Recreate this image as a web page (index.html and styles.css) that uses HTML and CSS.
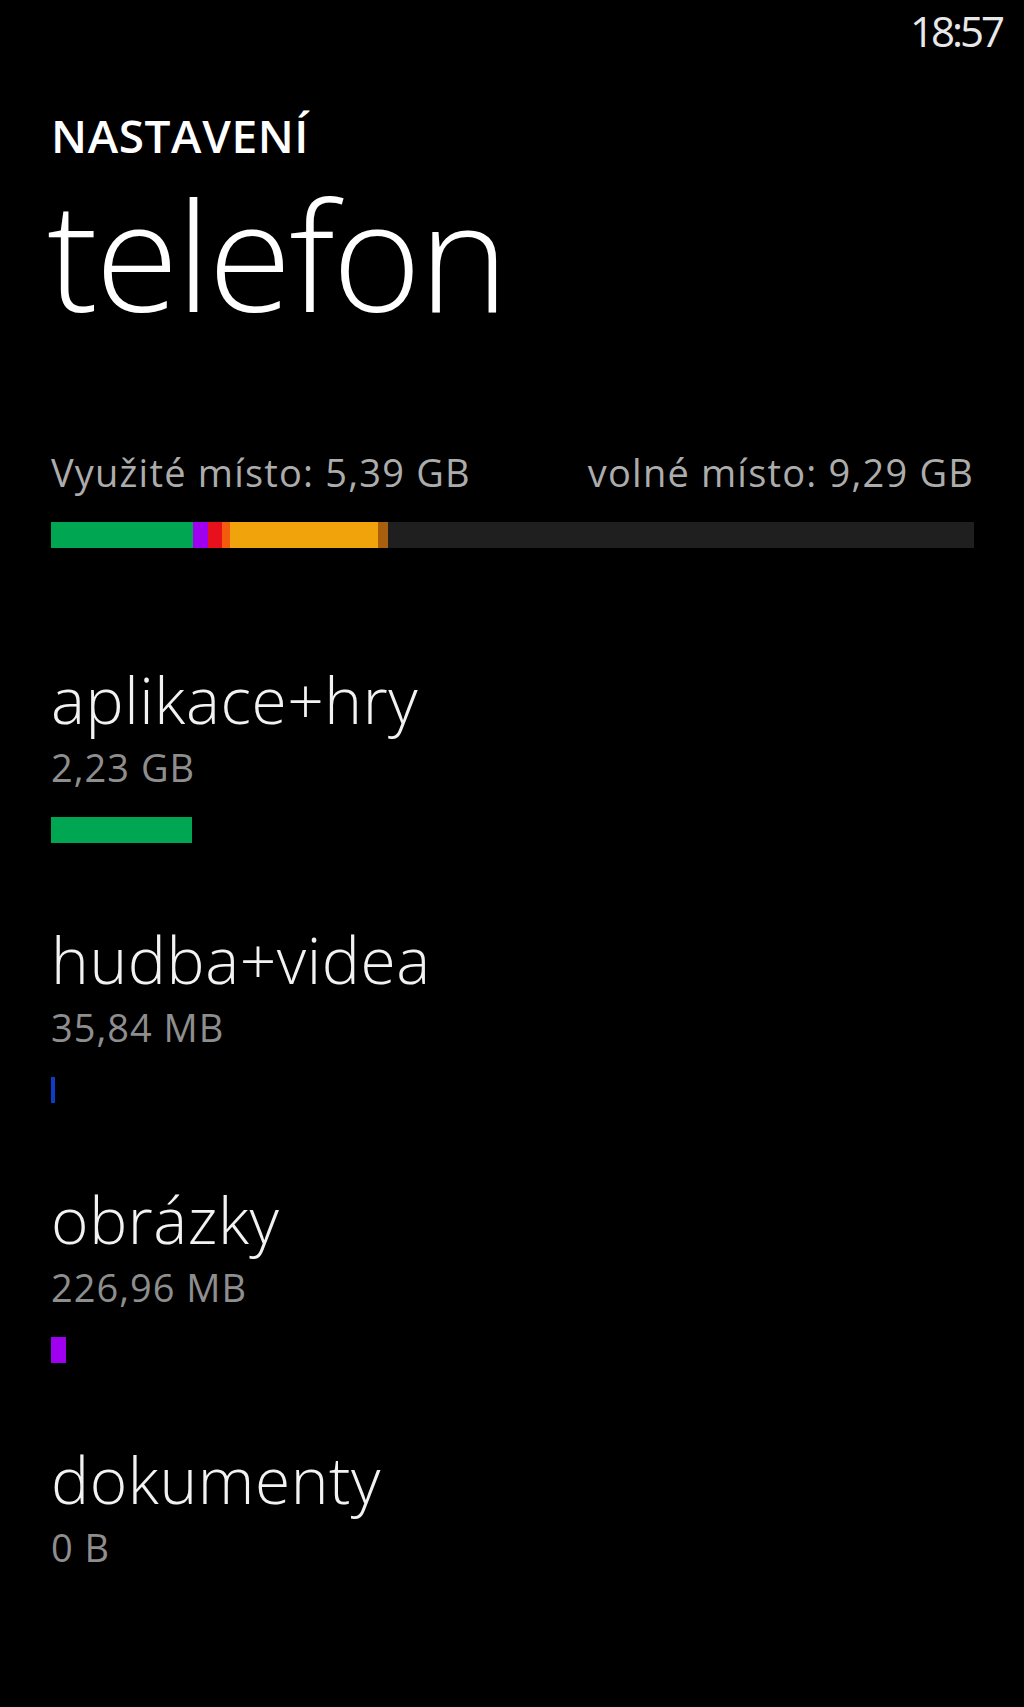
FILE: index.html
```html
<!DOCTYPE html>
<html lang="cs">
<head>
  <meta charset="UTF-8">
  <title>telefon</title>
  <link rel="stylesheet" href="styles.css">
</head>
<body>

  <div class="status-bar">
    <span class="clock">18:57</span>
  </div>

  <div class="page">
    <div class="app-title">NASTAVENÍ</div>
    <h1 class="page-title">telefon</h1>

    <div class="storage-summary">
      <span>Využité místo: 5,39 GB</span>
      <span>volné místo: 9,29 GB</span>
    </div>

    <div class="usage-bar">
      <div class="seg seg-apps" style="width: 142px;"></div>
      <div class="seg seg-pictures" style="width: 15px;"></div>
      <div class="seg seg-other" style="width: 14px;"></div>
      <div class="seg seg-temp" style="width: 8px;"></div>
      <div class="seg seg-system" style="width: 148px;"></div>
      <div class="seg seg-edge" style="width: 10px;"></div>
    </div>

    <div class="category">
      <div class="category-name">aplikace+hry</div>
      <div class="category-size">2,23 GB</div>
      <div class="category-bar bar-apps" style="width: 141px;"></div>
    </div>

    <div class="category">
      <div class="category-name">hudba+videa</div>
      <div class="category-size">35,84 MB</div>
      <div class="category-bar bar-music" style="width: 4px;"></div>
    </div>

    <div class="category">
      <div class="category-name">obrázky</div>
      <div class="category-size">226,96 MB</div>
      <div class="category-bar bar-pictures" style="width: 15px;"></div>
    </div>

    <div class="category">
      <div class="category-name">dokumenty</div>
      <div class="category-size">0 B</div>
    </div>
  </div>

</body>
</html>
```

FILE: styles.css
```css
body {
  margin: 0;
  background: #000;
  color: #fff;
  font-family: "Open Sans", "Noto Sans", sans-serif;
  height: 1707px;
  overflow: hidden;
}

.status-bar {
  display: flex;
  justify-content: flex-end;
  padding: 10px 22px 0 0;
  height: 42px;
}

.clock {
  font-size: 42px;
  line-height: 1;
  letter-spacing: -3px;
  color: #e8e8e8;
}

.page {
  padding: 0 50px 0 51px;
}

.app-title {
  margin-top: 60px;
  font-size: 46px;
  line-height: 1;
  font-weight: 600;
  letter-spacing: 0.6px;
}

.page-title {
  margin: 20px 0 0 -4px;
  font-size: 152px;
  line-height: 1;
  font-weight: 300;
  letter-spacing: -2.5px;
}

.storage-summary {
  display: flex;
  justify-content: space-between;
  margin-top: 123px;
  font-size: 38px;
  line-height: 1;
  color: #acacac;
  letter-spacing: 1.2px;
}

.usage-bar {
  display: flex;
  margin-top: 31px;
  height: 26px;
  background: #1f1f1f;
}

.seg {
  height: 100%;
}

.seg-apps { background: #00a651; }
.seg-pictures { background: #a000f0; }
.seg-other { background: #e8101c; }
.seg-temp { background: #f25c0c; }
.seg-system { background: #f0a30a; }
.seg-edge { background: #a8600e; }

.category {
  margin-top: 120px;
}

.category + .category {
  margin-top: 85px;
}

.category-name {
  font-size: 64px;
  line-height: 1;
  font-weight: 350;
  letter-spacing: 0.6px;
  color: #f2f2f2;
}

.category-size {
  margin-top: 16px;
  font-size: 38px;
  line-height: 1;
  letter-spacing: 1px;
  color: #8e8e8e;
}

.category-bar {
  margin-top: 31px;
  height: 26px;
}

.bar-apps { background: #00a651; }
.bar-music { background: #0a3ec8; }
.bar-pictures { background: #a000f0; }
```
